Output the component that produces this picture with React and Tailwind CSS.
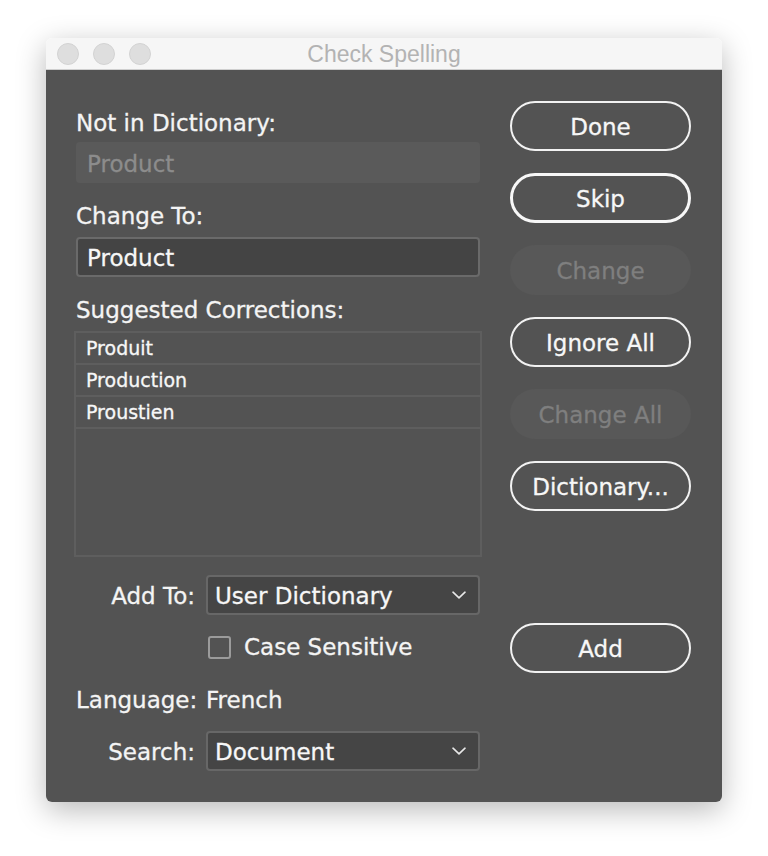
const font = { fontFamily: '"DejaVu Sans", Verdana, sans-serif' };

const PillButton = ({ label, variant = "normal", className = "" }) => {
  const styles = {
    normal: "border-2 border-[#f2f2f2] text-[#f7f7f7]",
    primary: "border-[3px] border-[#f7f7f7] text-[#f7f7f7]",
    disabled: "bg-[#585858] text-[#7f7f7f]",
  };
  return (
    <div
      className={`flex h-[50px] w-[181px] items-center justify-center rounded-full pt-[2px] text-[23px] leading-none ${styles[variant]} ${className}`}
    >
      {label}
    </div>
  );
};

const Chevron = () => (
  <svg width="14" height="8" viewBox="0 0 14 8" fill="none" className="text-[#e8e8e8]">
    <path d="M1 1.2L7 6.8L13 1.2" stroke="currentColor" strokeWidth="1.6" strokeLinecap="round" strokeLinejoin="round" />
  </svg>
);

const SelectBox = ({ value }) => (
  <div className="flex h-[40px] w-[274px] items-center justify-between rounded-[4px] border-2 border-[#676767] bg-[#454545] pl-[7px] pr-[12px] text-[23px] text-[#f7f7f7]">
    <span className="pt-[2px]">{value}</span>
    <Chevron />
  </div>
);

const Label = ({ children, className = "" }) => (
  <div className={`h-[28px] text-[23px] leading-[28px] text-[#f4f4f4] ${className}`}>{children}</div>
);

export default function App() {
  const suggestions = ["Produit", "Production", "Proustien"];

  return (
    <div
      className="h-[856px] w-[768px] bg-white pl-[46px] pt-[38px] [-webkit-text-stroke:0.3px_currentColor]"
      style={font}
    >
      <div className="w-[676px] overflow-hidden rounded-[6px] shadow-[0_8px_30px_rgba(0,0,0,0.28)]">
        {/* title bar */}
        <div className="relative flex h-[32px] items-center border-b border-[#cfcfcf] bg-[#f6f6f6] px-[11px]">
          <div className="flex gap-[14px]">
            <span className="h-[22px] w-[22px] rounded-full border border-[#d2d2d2] bg-[#dedede]" />
            <span className="h-[22px] w-[22px] rounded-full border border-[#d2d2d2] bg-[#dedede]" />
            <span className="h-[22px] w-[22px] rounded-full border border-[#d2d2d2] bg-[#dedede]" />
          </div>
          <div
            className="absolute inset-0 flex items-center justify-center pt-[2px] text-[23px] text-[#b3b3b3] [-webkit-text-stroke:0px]"
            style={{ fontFamily: '"Liberation Sans", Arial, sans-serif' }}
          >
            Check Spelling
          </div>
        </div>

        {/* body */}
        <div className="flex h-[732px] gap-[30px] bg-[#535353] pl-[30px] pr-[31px]">
          {/* left column */}
          <div className="flex w-[404px] flex-col pt-[39px]">
            <Label>Not in Dictionary:</Label>
            <div className="mt-[5px] flex h-[41px] items-center rounded-[4px] bg-[#5a5a5a] pl-[11px] pt-[4px] text-[23px] text-[#8c8c8c]">
              Product
            </div>

            <Label className="mt-[19px]">Change To:</Label>
            <div className="mt-[7px] flex h-[40px] items-center rounded-[4px] border-2 border-[#6a6a6a] bg-[#444444] pl-[9px] pt-[3px] text-[23px] text-[#f7f7f7]">
              Product
            </div>

            <Label className="mt-[19px]">Suggested Corrections:</Label>
            <div className="-mx-[2px] mt-[7px] flex h-[226px] flex-col border-2 border-[#5e5e5e]">
              {suggestions.map((s) => (
                <div
                  key={s}
                  className="flex h-[32px] items-center border-b-2 border-[#5e5e5e] pl-[10px] pt-[1px] text-[19px] text-[#f7f7f7]"
                >
                  {s}
                </div>
              ))}
            </div>

            <div className="mt-[18px] flex h-[40px] items-center gap-[11px]">
              <span className="w-[119px] pt-[2px] text-right text-[23px] text-[#f4f4f4]">Add To:</span>
              <SelectBox value="User Dictionary" />
            </div>

            <div className="mt-[18px] flex h-[28px] items-center gap-[11px]">
              <span className="w-[119px]" />
              <span className="ml-[2px] h-[23px] w-[23px] rounded-[3px] border-2 border-[#9b9b9b]" />
              <span className="ml-[2px] text-[23px] text-[#f4f4f4]">Case Sensitive</span>
            </div>

            <div className="mt-[25px] flex h-[28px] items-center gap-[11px]">
              <span className="w-[119px] text-right text-[23px] text-[#f4f4f4]">Language:</span>
              <span className="text-[23px] text-[#f4f4f4]">French</span>
            </div>

            <div className="mt-[17px] flex h-[40px] items-center gap-[11px]">
              <span className="w-[119px] pt-[2px] text-right text-[23px] text-[#f4f4f4]">Search:</span>
              <SelectBox value="Document" />
            </div>
          </div>

          {/* right column */}
          <div className="flex flex-col gap-[22px] pt-[31px]">
            <PillButton label="Done" />
            <PillButton label="Skip" variant="primary" />
            <PillButton label="Change" variant="disabled" />
            <PillButton label="Ignore All" />
            <PillButton label="Change All" variant="disabled" />
            <PillButton label="Dictionary..." />
            <PillButton label="Add" className="mt-[90px]" />
          </div>
        </div>
      </div>
    </div>
  );
}
